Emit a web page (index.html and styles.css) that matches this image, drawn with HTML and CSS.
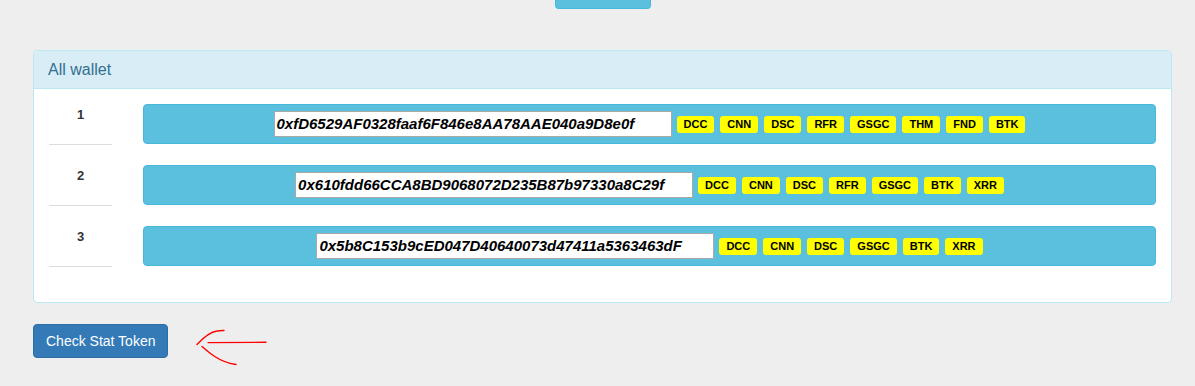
FILE: index.html
```html
<!DOCTYPE html>
<html>
<head>
<meta charset="utf-8">
<link rel="stylesheet" href="styles.css">
</head>
<body>
<div class="container">
  <div class="top-row"><div class="top-btn"></div></div>
  <div class="panel">
    <div class="panel-heading">All wallet</div>
    <div class="panel-body">
      <div class="row">
        <div class="num">1</div>
        <div class="bar">
          <div class="addr">0xfD6529AF0328faaf6F846e8AA78AAE040a9D8e0f</div>
          <div class="labels">
            <span class="label">DCC</span><span class="label">CNN</span><span class="label">DSC</span><span class="label">RFR</span><span class="label">GSGC</span><span class="label">THM</span><span class="label">FND</span><span class="label">BTK</span>
          </div>
        </div>
      </div>
      <div class="row">
        <div class="num">2</div>
        <div class="bar">
          <div class="addr">0x610fdd66CCA8BD9068072D235B87b97330a8C29f</div>
          <div class="labels">
            <span class="label">DCC</span><span class="label">CNN</span><span class="label">DSC</span><span class="label">RFR</span><span class="label">GSGC</span><span class="label">BTK</span><span class="label">XRR</span>
          </div>
        </div>
      </div>
      <div class="row">
        <div class="num">3</div>
        <div class="bar">
          <div class="addr">0x5b8C153b9cED047D40640073d47411a5363463dF</div>
          <div class="labels">
            <span class="label">DCC</span><span class="label">CNN</span><span class="label">DSC</span><span class="label">GSGC</span><span class="label">BTK</span><span class="label">XRR</span>
          </div>
        </div>
      </div>
    </div>
  </div>
  <div class="actions">
    <button class="btn-primary">Check Stat Token</button>
    <svg class="arrow" width="80" height="46" viewBox="190 325 80 46">
      <path d="M197 343.5 C203 337 210 331 217 330 C220 329.5 222 329.3 224 329.5" fill="none" stroke="#f00" stroke-width="1.4" stroke-linecap="round"/>
      <path d="M208 341.6 L266 341.3" fill="none" stroke="#f00" stroke-width="1.4" stroke-linecap="round"/>
      <path d="M202 345.5 C206 349 209 352 214 355 C220 359 226 362 236 363.5" fill="none" stroke="#f00" stroke-width="1.4" stroke-linecap="round"/>
    </svg>
  </div>
</div>
</body>
</html>
```
FILE: styles.css
```css
html, body {
  margin: 0;
  padding: 0;
  background: #eeeeee;
  font-family: "Liberation Sans", Arial, Helvetica, sans-serif;
  font-size: 14px;
  color: #333;
}
.container {
  margin-left: 33px;
  width: 1139px;
}
.top-row {
  display: flex;
  justify-content: center;
  height: 9px;
  margin-bottom: 41px;
}
.top-btn {
  width: 94px;
  height: 8px;
  background: #5bc0de;
  border: 1px solid #46b8da;
  border-top: none;
  border-radius: 0 0 4px 4px;
}
.panel {
  background: #fff;
  border: 1px solid #bce8f1;
  border-radius: 4px;
  margin-bottom: 21px;
}
.panel-heading {
  background: #d9edf7;
  color: #31708f;
  border-bottom: 1px solid #bce8f1;
  border-radius: 3px 3px 0 0;
  padding: 10px 14px;
  font-size: 16px;
  line-height: 17px;
}
.panel-body {
  padding: 15px;
}
.row {
  display: flex;
  align-items: flex-start;
  margin-bottom: 20px;
}
.num {
  width: 63px;
  height: 41px;
  box-sizing: border-box;
  border-bottom: 1px solid #ddd;
  text-align: center;
  font-weight: bold;
  font-size: 13px;
  padding-top: 3px;
  color: #333;
}
.bar {
  margin-left: 31px;
  flex: 1;
  height: 40px;
  box-sizing: border-box;
  background: #5bc0de;
  border: 1px solid #46b8da;
  border-radius: 4px;
  display: flex;
  align-items: center;
  justify-content: center;
}
.addr {
  width: 398px;
  height: 26px;
  box-sizing: border-box;
  background: #fff;
  border: 1px solid #a9a9a9;
  padding-left: 2px;
  font-weight: bold;
  font-style: italic;
  font-size: 15px;
  line-height: 24px;
  color: #000;
  white-space: nowrap;
}
.labels {
  display: flex;
  gap: 6px;
  margin-left: 5px;
}
.label {
  display: inline-block;
  background: #ffff00;
  color: #000;
  font-weight: bold;
  font-size: 11px;
  line-height: 11px;
  padding: 3px 7px 3px;
  border-radius: 3px;
}
.actions {
  display: flex;
  align-items: flex-start;
}
.btn-primary {
  background: #337ab7;
  border: 1px solid #2e6da4;
  border-radius: 4px;
  color: #fff;
  font-family: "Liberation Sans", Arial, sans-serif;
  font-size: 14px;
  line-height: 20px;
  padding: 6px 12px;
  height: 34px;
  box-sizing: border-box;
  white-space: nowrap;
}
.arrow {
  margin-left: 22px;
  margin-top: 2px;
}
```
